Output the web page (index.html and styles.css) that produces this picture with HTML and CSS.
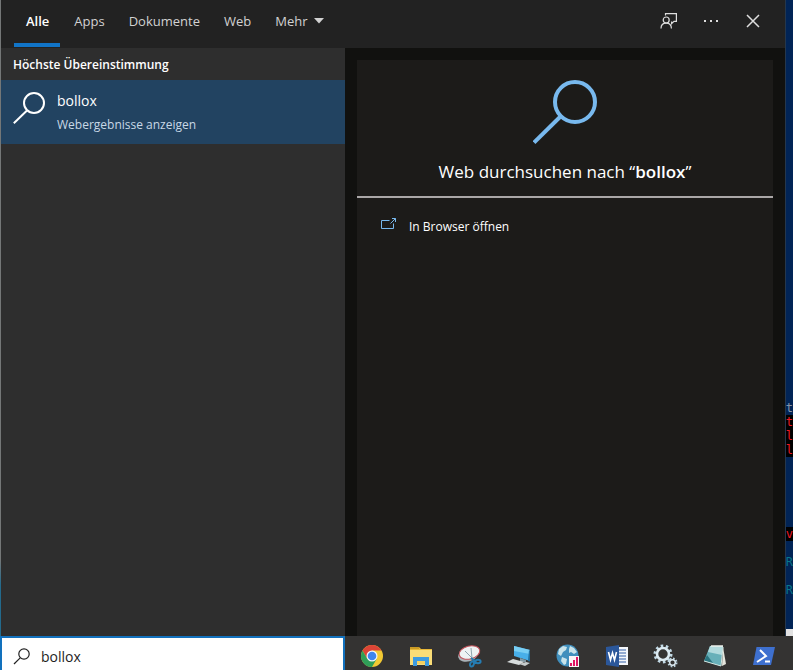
FILE: index.html
```html
<!DOCTYPE html>
<html lang="de">
<head>
<meta charset="utf-8">
<title>Suche</title>
<link rel="stylesheet" href="styles.css">
</head>
<body>
<div class="desktop">
  <div class="edge"></div>
  <main class="search">
    <header class="topbar">
      <nav class="tabs">
        <button class="tab active">Alle</button>
        <button class="tab">Apps</button>
        <button class="tab">Dokumente</button>
        <button class="tab">Web</button>
        <button class="tab">Mehr <svg width="10" height="6" viewBox="0 0 10 6"><path d="M0 0h10L5 5.500z" fill="currentColor"/></svg></button>
      </nav>
      <div class="actions">
        <button class="action" aria-label="Feedback">
          <svg width="18" height="18" viewBox="0 0 18 18" fill="none" stroke="currentColor" stroke-width="1.200"><path d="M5.500 3.500V1.600H16.400V9.400H14L11.600 11.600V9.400"/><circle cx="6.200" cy="8" r="3"/><path d="M1 16.500C1 13 3.200 11.200 6.200 11.200S11.400 13 11.400 16.500"/></svg>
        </button>
        <button class="action" aria-label="Optionen">
          <svg width="18" height="18" viewBox="0 0 18 18" fill="currentColor"><path d="M2 8h2v2H2zM8 8h2v2H8zM14 8h2v2h-2z"/></svg>
        </button>
        <button class="action" aria-label="Schließen">
          <svg width="18" height="18" viewBox="0 0 18 18" fill="none" stroke="currentColor" stroke-width="1.500"><path d="M3 3l12 12M15 3L3 15"/></svg>
        </button>
      </div>
    </header>
    <div class="content">
      <section class="results">
        <h2 class="group">Höchste Übereinstimmung</h2>
        <a class="result" href="#bollox">
          <svg width="32" height="32" viewBox="0 0 32 32" fill="none" stroke="currentColor" stroke-width="2"><circle cx="21" cy="11" r="10"/><path d="M14 18.500L.8 31.200"/></svg>
          <span class="result-text"><span class="result-title">bollox</span><span class="result-sub">Webergebnisse anzeigen</span></span>
        </a>
      </section>
      <section class="preview">
        <div class="card">
          <div class="hero">
            <svg width="64" height="64" viewBox="0 0 64 64" fill="none" stroke="currentColor" stroke-width="4"><circle cx="42" cy="22" r="20"/><path d="M28 36L1 62.500"/></svg>
            <h1 class="hero-title">Web durchsuchen nach “<b>bollox</b>”</h1>
          </div>
          <a class="open" href="#open">
            <svg width="17" height="16" viewBox="0 0 17 16" fill="none" stroke="currentColor"><path d="M9.500 4.500h-8v8h12v-5M10.500 7.500l5-5M12 2.500h3.500V6"/></svg>
            <span>In Browser öffnen</span>
          </a>
        </div>
      </section>
    </div>
  </main>
  <aside class="console">
    <div class="lines">
      <span class="line gray">rt</span>
      <span class="line red">st</span>
      <span class="line red">el</span>
      <span class="line red">pl</span>
      <span class="line"></span><span class="line"></span><span class="line"></span><span class="line"></span><span class="line"></span>
      <span class="line red">rv</span>
      <span class="line"></span>
      <span class="line teal">ER</span>
      <span class="line"></span>
      <span class="line teal">kR</span>
    </div>
    <div class="scroll"></div>
  </aside>
</div>
<footer class="taskbar">
  <label class="searchbox">
    <svg width="18" height="20" viewBox="0 0 18 20" fill="none" stroke="currentColor" stroke-width="1.200"><circle cx="11" cy="8" r="5.200"/><path d="M7.200 11.800L1 18"/></svg>
    <input class="query" type="text" value="bollox" aria-label="Suche">
  </label>
  <div class="apps">
    <button class="app" aria-label="Chrome">
      <svg width="24" height="24" viewBox="0 0 24 24"><circle cx="12" cy="12" r="11" fill="#f2c933"/><path d="M2.500 6.500A11 11 0 0 1 21.530 6.500H12L7.240 14.750z" fill="#dc4437"/><path d="M2.470 6.500A11 11 0 0 0 12 23l4.760-8.250H7.240z" fill="#2f9e58"/><circle cx="12" cy="12" r="5.500" fill="#f4f7fb"/><circle cx="12" cy="12" r="4.300" fill="#3f86ee"/></svg>
    </button>
    <button class="app" aria-label="Explorer">
      <svg width="24" height="24" viewBox="0 0 24 24"><path d="M1 4V3h9l2 2h11v16H1z" fill="#e8b838"/><path d="M1 6h22v15H1z" fill="#fadd77"/><path d="M1 3h9v2H1z" fill="#ca9b25"/><path d="M4 22v-9h16v9h-4v-5H8v5z" fill="#3d9be0"/><path d="M8 17h8v3H8z" fill="#f6d05e"/></svg>
    </button>
    <button class="app" aria-label="Snipping Tool">
      <svg width="26" height="24" viewBox="0 0 26 24"><ellipse cx="11" cy="11" rx="10" ry="6.500" transform="rotate(-14 11 11)" fill="#a9b1b6"/><ellipse cx="12.500" cy="8.500" rx="10.500" ry="6.500" transform="rotate(-14 12.500 8.500)" fill="#eef2f3" stroke="#c4525a"/><path d="M8 7l7 7M14 4l1 10" stroke="#90a4ae"/><g fill="none" stroke="#257cb2" stroke-width="2"><ellipse cx="15" cy="20" rx="1.800" ry="2.600" transform="rotate(20 15 20)"/><ellipse cx="21" cy="17.500" rx="2.600" ry="1.800"/><path d="M14 14l4 3 0 3"/></g></svg>
    </button>
    <button class="app" aria-label="Computer">
      <svg width="26" height="24" viewBox="0 0 26 24"><path d="M8 2l16 4v11L8 12z" fill="#48afe9"/><path d="M8 2l16 4v4L8 7z" fill="#78cef4"/><path d="M23 6l1 .500v11L22 17z" fill="#216e9d"/><path d="M14 14l6 2v2h-6z" fill="#8299a4"/><path d="M1 18l6-3 11 3-5 3z" fill="#d8dddd"/><path d="M13 20l7-2 4 1-5 3z" fill="#c6cccd"/></svg>
    </button>
    <button class="app" aria-label="Netzwerk">
      <svg width="24" height="24" viewBox="0 0 24 24"><circle cx="11.500" cy="11.500" r="11" fill="#408fbd"/><path d="M3 5l4-3 4 1-1 3-3 2-2 4-3-2zM14 2l4 2 3 4-3 2-3-2-2 1 0-4zM6 13l5 2-1 5-2 1-3-4z" fill="#c8e3ea"/><path d="M13 12h10v11H13z" fill="#faf4f6"/><path d="M14 19h2v3h-2zM17 16h2v6h-2zM20 13h2v9h-2z" fill="#df1463"/></svg>
    </button>
    <button class="app" aria-label="Word">
      <svg width="24" height="24" viewBox="0 0 24 24"><path d="M12 3h11v18H12z" fill="#f4f7fb"/><path d="M14 6h7M14 9h7M14 12h7M14 15h7M14 18h7" stroke="#3260a8" stroke-width="1.200"/><path d="M1 3l13-2v22L1 21z" fill="#2b579a"/><path d="M3.500 8l2 8 2-7 2 7 2-8" fill="none" stroke="#fff" stroke-width="1.600"/></svg>
    </button>
    <button class="app" aria-label="Dienste">
      <svg width="26" height="24" viewBox="0 0 26 24" fill="none"><circle cx="10" cy="10" r="8" stroke="#c3dae6" stroke-width="3" stroke-dasharray="2.500 2.527"/><circle cx="10" cy="10" r="6" stroke="#dceaf1" stroke-width="2.600"/><circle cx="19.500" cy="18.500" r="4" stroke="#bcd4e0" stroke-width="2" stroke-dasharray="1.600 1.542"/><circle cx="19.500" cy="18.500" r="2.800" stroke="#dceaf1" stroke-width="1.400"/></svg>
    </button>
    <button class="app" aria-label="Editor">
      <svg width="24" height="24" viewBox="0 0 24 24"><path d="M20 3l3 17-4 2z" fill="#e5e6dd"/><path d="M7 2h13l-2 20L1 17z" fill="#68b0b9"/><path d="M7 2h13l-1 9L5 8z" fill="#b2dadd"/><path d="M1 17l3-6 6 8z" fill="#2b7580"/><path d="M8 2h12" stroke="#eef2ec" stroke-width="1.500"/><path d="M20 3l-2 19L1 17" fill="none" stroke="#d4e7e2"/></svg>
    </button>
    <button class="app" aria-label="PowerShell">
      <svg width="26" height="24" viewBox="0 0 26 24"><path d="M5.500 3H24l-4 18H2z" fill="#3e70cf"/><path d="M9 6l6 6-9 6M14 17.500h5" fill="none" stroke="#fff" stroke-width="2"/></svg>
    </button>
  </div>
</footer>
</body>
</html>
```
FILE: styles.css
```css
* { box-sizing: border-box; }

body {
  margin: 0;
  min-height: 100vh;
  display: grid;
  grid-template-rows: 1fr 34px;
  overflow: hidden;
  background: #333;
  color: #fff;
  font: 12px/22px "Open Sans", "Noto Sans", sans-serif;
}

button {
  margin: 0;
  padding: 0;
  border: 0;
  background: none;
  color: inherit;
  font: inherit;
}

a { color: inherit; text-decoration: none; }
svg { display: block; flex: none; }

.desktop {
  display: grid;
  grid-template-columns: 1px 1fr 8px;
}

.edge { background: linear-gradient(#747777 88%, #236a8c 92%); }

.search {
  display: grid;
  grid-template-rows: 48px 1fr;
}

.topbar {
  display: flex;
  justify-content: space-between;
  background: #222;
}

.tabs { display: flex; gap: 4px; padding-left: 13px; }

.tab {
  display: flex;
  align-items: center;
  gap: 6px;
  height: 47px;
  padding: 0 10px 2px;
  border-bottom: 4px solid transparent;
  color: #d2d2d2;
  font-size: 13px;
}

.tab.active {
  padding: 0 11px 2px 12px;
  border-color: #1174c7;
  color: #fff;
  font-weight: 600;
}

.actions { display: flex; padding-right: 11px; }

.action {
  width: 42px;
  height: 42px;
  display: grid;
  place-items: center;
  color: #dedede;
}

.content {
  display: grid;
  grid-template-columns: minmax(0, 344fr) minmax(0, 440fr);
}

.results { background: #2e2e2e; }

.group {
  margin: 0;
  padding: 6px 12px 4px;
  font-size: 12px;
  font-weight: 600;
}

.result {
  display: flex;
  gap: 12px;
  height: 64px;
  padding: 12px;
  background: #224361;
}

.result-text { display: flex; flex-direction: column; gap: 2px; margin-top: -2px; }
.result-title { font-size: 14px; }
.result-sub { color: #c8d8e6; }

.preview { display: grid; padding: 12px 12px 0; background: #11110f; }
.card { background: #1c1b19; }

.hero {
  display: flex;
  flex-direction: column;
  align-items: center;
  gap: 16px;
  padding: 20px 0 12px;
  border-bottom: 2px solid #aaa7a7;
  color: #78b9ee;
}

.hero-title {
  margin: 0;
  color: #fff;
  font-size: 17px;
  line-height: 24px;
  font-weight: 400;
}

.hero-title b { font-weight: 600; }

.open { display: flex; gap: 12px; padding: 18px 23px; }
.open svg { color: #78b9ee; }

.console {
  display: flex;
  flex-direction: column;
  justify-content: flex-end;
  overflow: hidden;
  border-left: 1px solid #24374d;
  background: #012456;
  font: 12px/14px "DejaVu Sans Mono", monospace;
}

.lines { display: flex; flex-direction: column; padding-bottom: 32px; }
.line { display: flex; justify-content: flex-end; height: 14px; }
.gray { color: #8794a8; }
.red { background: #000; color: #f01824; }
.teal { color: #08778a; }
.scroll { height: 7px; background: #e2e2e2; }

.taskbar {
  display: grid;
  grid-template-columns: minmax(0, 345fr) minmax(0, 448fr);
  overflow: hidden;
  background: #343332;
}

.searchbox {
  display: flex;
  gap: 10px;
  padding: 8px 0 0 11px;
  border: 2px solid #1271bd;
  border-bottom: 0;
  background: #fff;
  color: #222;
}

.query {
  flex: 1;
  min-width: 0;
  height: 22px;
  padding: 0;
  border: 0;
  outline: 0;
  background: none;
  color: #1e1e1e;
  font: 14px/22px "Open Sans", "Noto Sans", sans-serif;
}

.apps {
  display: flex;
  justify-content: space-between;
  padding: 8px 16px 0 14px;
}

.app { width: 26px; height: 24px; display: grid; place-items: center; }
```
